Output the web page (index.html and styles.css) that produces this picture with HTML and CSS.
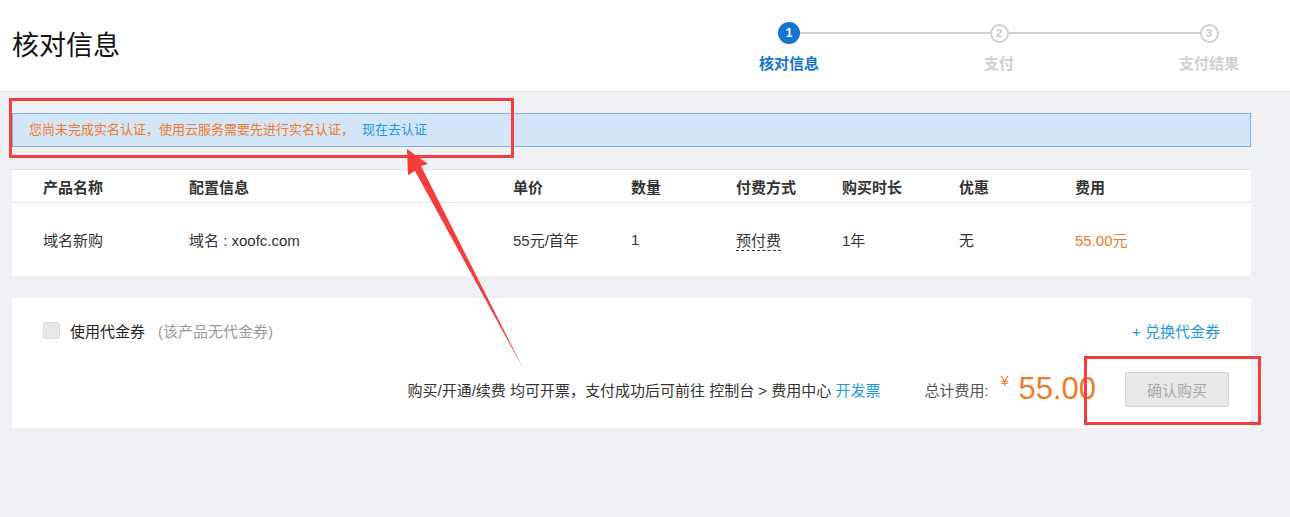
FILE: index.html
```html
<!DOCTYPE html>
<html lang="zh-CN">
<head>
<meta charset="utf-8">
<title>核对信息</title>
<link rel="stylesheet" href="styles.css">
</head>
<body>
<header class="header">
  <h1 class="title">核对信息</h1>
  <ol class="steps">
    <li class="step step-active"><span class="dot">1</span><span class="step-label">核对信息</span></li>
    <li class="step"><span class="dot">2</span><span class="step-label">支付</span></li>
    <li class="step"><span class="dot">3</span><span class="step-label">支付结果</span></li>
  </ol>
</header>
<main class="main">
  <div class="notice">您尚未完成实名认证，使用云服务需要先进行实名认证，<a class="notice-link">现在去认证</a></div>
  <section class="order">
    <div class="row row-head">
      <span>产品名称</span><span>配置信息</span><span>单价</span><span>数量</span><span>付费方式</span><span>购买时长</span><span>优惠</span><span>费用</span>
    </div>
    <div class="row row-body">
      <span>域名新购</span><span>域名 : xoofc.com</span><span>55元/首年</span><span>1</span><span><em class="dashed">预付费</em></span><span>1年</span><span>无</span><span class="fee">55.00元</span>
    </div>
  </section>
  <section class="pay">
    <div class="pay-top">
      <label class="coupon"><span class="checkbox"></span><span class="coupon-text">使用代金券</span><span class="coupon-hint">(该产品无代金券)</span></label>
      <a class="link">+ 兑换代金券</a>
    </div>
    <div class="pay-bottom">
      <span class="invoice">购买/开通/续费 均可开票，支付成功后可前往 控制台 &gt; 费用中心 <a class="link">开发票</a></span>
      <span class="total-label">总计费用:</span>
      <span class="total"><span class="yen">¥</span><span class="amount">55.00</span></span>
      <button class="buy" disabled>确认购买</button>
    </div>
  </section>
</main>
<svg class="marks" width="1290" height="517" viewBox="0 0 1290 517">
  <rect x="10.5" y="99.5" width="502" height="57" fill="none" stroke="#f53d3d" stroke-width="3"/>
  <rect x="1085.5" y="357.5" width="174" height="66" fill="none" stroke="#f53d3d" stroke-width="3"/>
  <polygon points="407,149 428,164 421,166 524,370 415,171 408,175" fill="#f53d3d"/>
</svg>
</body>
</html>
```
FILE: styles.css
```css
* { box-sizing: border-box; }
html, body { margin: 0; padding: 0; }
body {
  position: relative;
  width: 1290px;
  min-height: 517px;
  background: #f0f1f5;
  font-family: "Liberation Sans", "Noto Sans CJK SC", sans-serif;
  color: #333;
  font-size: 15px;
  overflow: hidden;
}
.header {
  height: 92px;
  background: #fff;
  border-bottom: 1px solid #e6e8ee;
  display: flex;
  justify-content: space-between;
  align-items: flex-start;
  padding: 0 51px 0 12px;
}
.title {
  margin: 26px 0 0;
  font-size: 27px;
  line-height: 36px;
  font-weight: normal;
  color: #111;
  font-family: "Noto Sans CJK SC", sans-serif;
}
.steps {
  list-style: none;
  margin: 22px 0 0;
  padding: 0;
  display: flex;
  gap: 150px;
}
.step {
  position: relative;
  width: 60px;
  display: flex;
  flex-direction: column;
  align-items: center;
}
.step:not(:last-child)::after {
  content: "";
  position: absolute;
  top: 10px;
  left: 30px;
  width: 210px;
  height: 2px;
  background: #cfcfcf;
}
.dot {
  position: relative;
  z-index: 1;
  width: 19px;
  height: 19px;
  margin: 1.5px 0;
  border-radius: 50%;
  border: 2px solid #d2d2d2;
  background: #fff;
  color: #c8c8c8;
  font-size: 11px;
  font-weight: bold;
  line-height: 15px;
  text-align: center;
}
.step-active .dot {
  width: 22px;
  height: 22px;
  margin: 0;
  border: none;
  background: #1574cc;
  color: #fff;
  font-size: 12px;
  line-height: 22px;
}
.step-label {
  margin-top: 9px;
  white-space: nowrap;
  font-size: 15px;
  line-height: 20px;
  font-weight: bold;
  color: #d0d0d0;
  font-family: "Noto Sans CJK SC", sans-serif;
}
.step-active .step-label { color: #1574cc; }
.main {
  padding: 21px 39px 0 12px;
}
.notice {
  height: 34px;
  background: #d2e6f8;
  border: 1px solid #7eb2e6;
  padding-left: 16px;
  font-size: 13px;
  line-height: 32px;
  color: #f2792a;
}
.notice-link {
  color: #1f97e6;
  margin-left: 8px;
}
.order {
  margin-top: 22px;
  background: #fff;
  border-top: 1px solid #e2e5ea;
}
.row {
  display: grid;
  grid-template-columns: 146px 324px 118px 105px 106px 117px 116px 1fr;
  padding-left: 31px;
  align-items: center;
}
.row-head {
  height: 33px;
  border-bottom: 1px solid #e2e5ea;
  font-weight: bold;
  color: #333;
}
.row-body {
  height: 73px;
  color: #333;
}
.dashed {
  font-style: normal;
  border-bottom: 1px dashed #333;
  padding-bottom: 1px;
}
.fee { color: #f07a2a; }
.pay {
  margin-top: 22px;
  background: #fff;
  height: 130px;
  padding: 22px 22px 0 31px;
}
.pay-top {
  display: flex;
  justify-content: space-between;
  align-items: center;
  height: 20px;
  padding-right: 9px;
}
.coupon {
  display: flex;
  align-items: center;
}
.checkbox {
  width: 17px;
  height: 17px;
  border-radius: 3px;
  background: #e8e8e8;
  border: 1px solid #dcdcdc;
  margin-right: 10px;
}
.coupon-text { color: #222; }
.coupon-hint {
  color: #999;
  margin-left: 13px;
}
.link { color: #1f97e6; }
.pay-bottom {
  margin-top: 32px;
  display: flex;
  justify-content: flex-end;
  align-items: center;
  height: 35px;
  font-size: 15px;
}
.invoice { color: #333; }
.total-label {
  margin-left: 44px;
  color: #555;
}
.total {
  margin-left: 12px;
  display: flex;
  align-items: flex-start;
  color: #f07a2a;
}
.yen {
  font-size: 14px;
  line-height: 14px;
  margin-right: 10px;
  margin-top: -1px;
}
.amount {
  font-size: 31px;
  line-height: 32px;
  margin-top: -2px;
}
.buy {
  margin-left: 29px;
  width: 104px;
  height: 35px;
  background: #e8e8e8;
  border: 1px solid #d4d4d4;
  border-radius: 2px;
  color: #a8a8a8;
  font-family: inherit;
  font-size: 15px;
  padding: 0;
}
.marks {
  position: absolute;
  top: 0;
  left: 0;
  pointer-events: none;
}
```
